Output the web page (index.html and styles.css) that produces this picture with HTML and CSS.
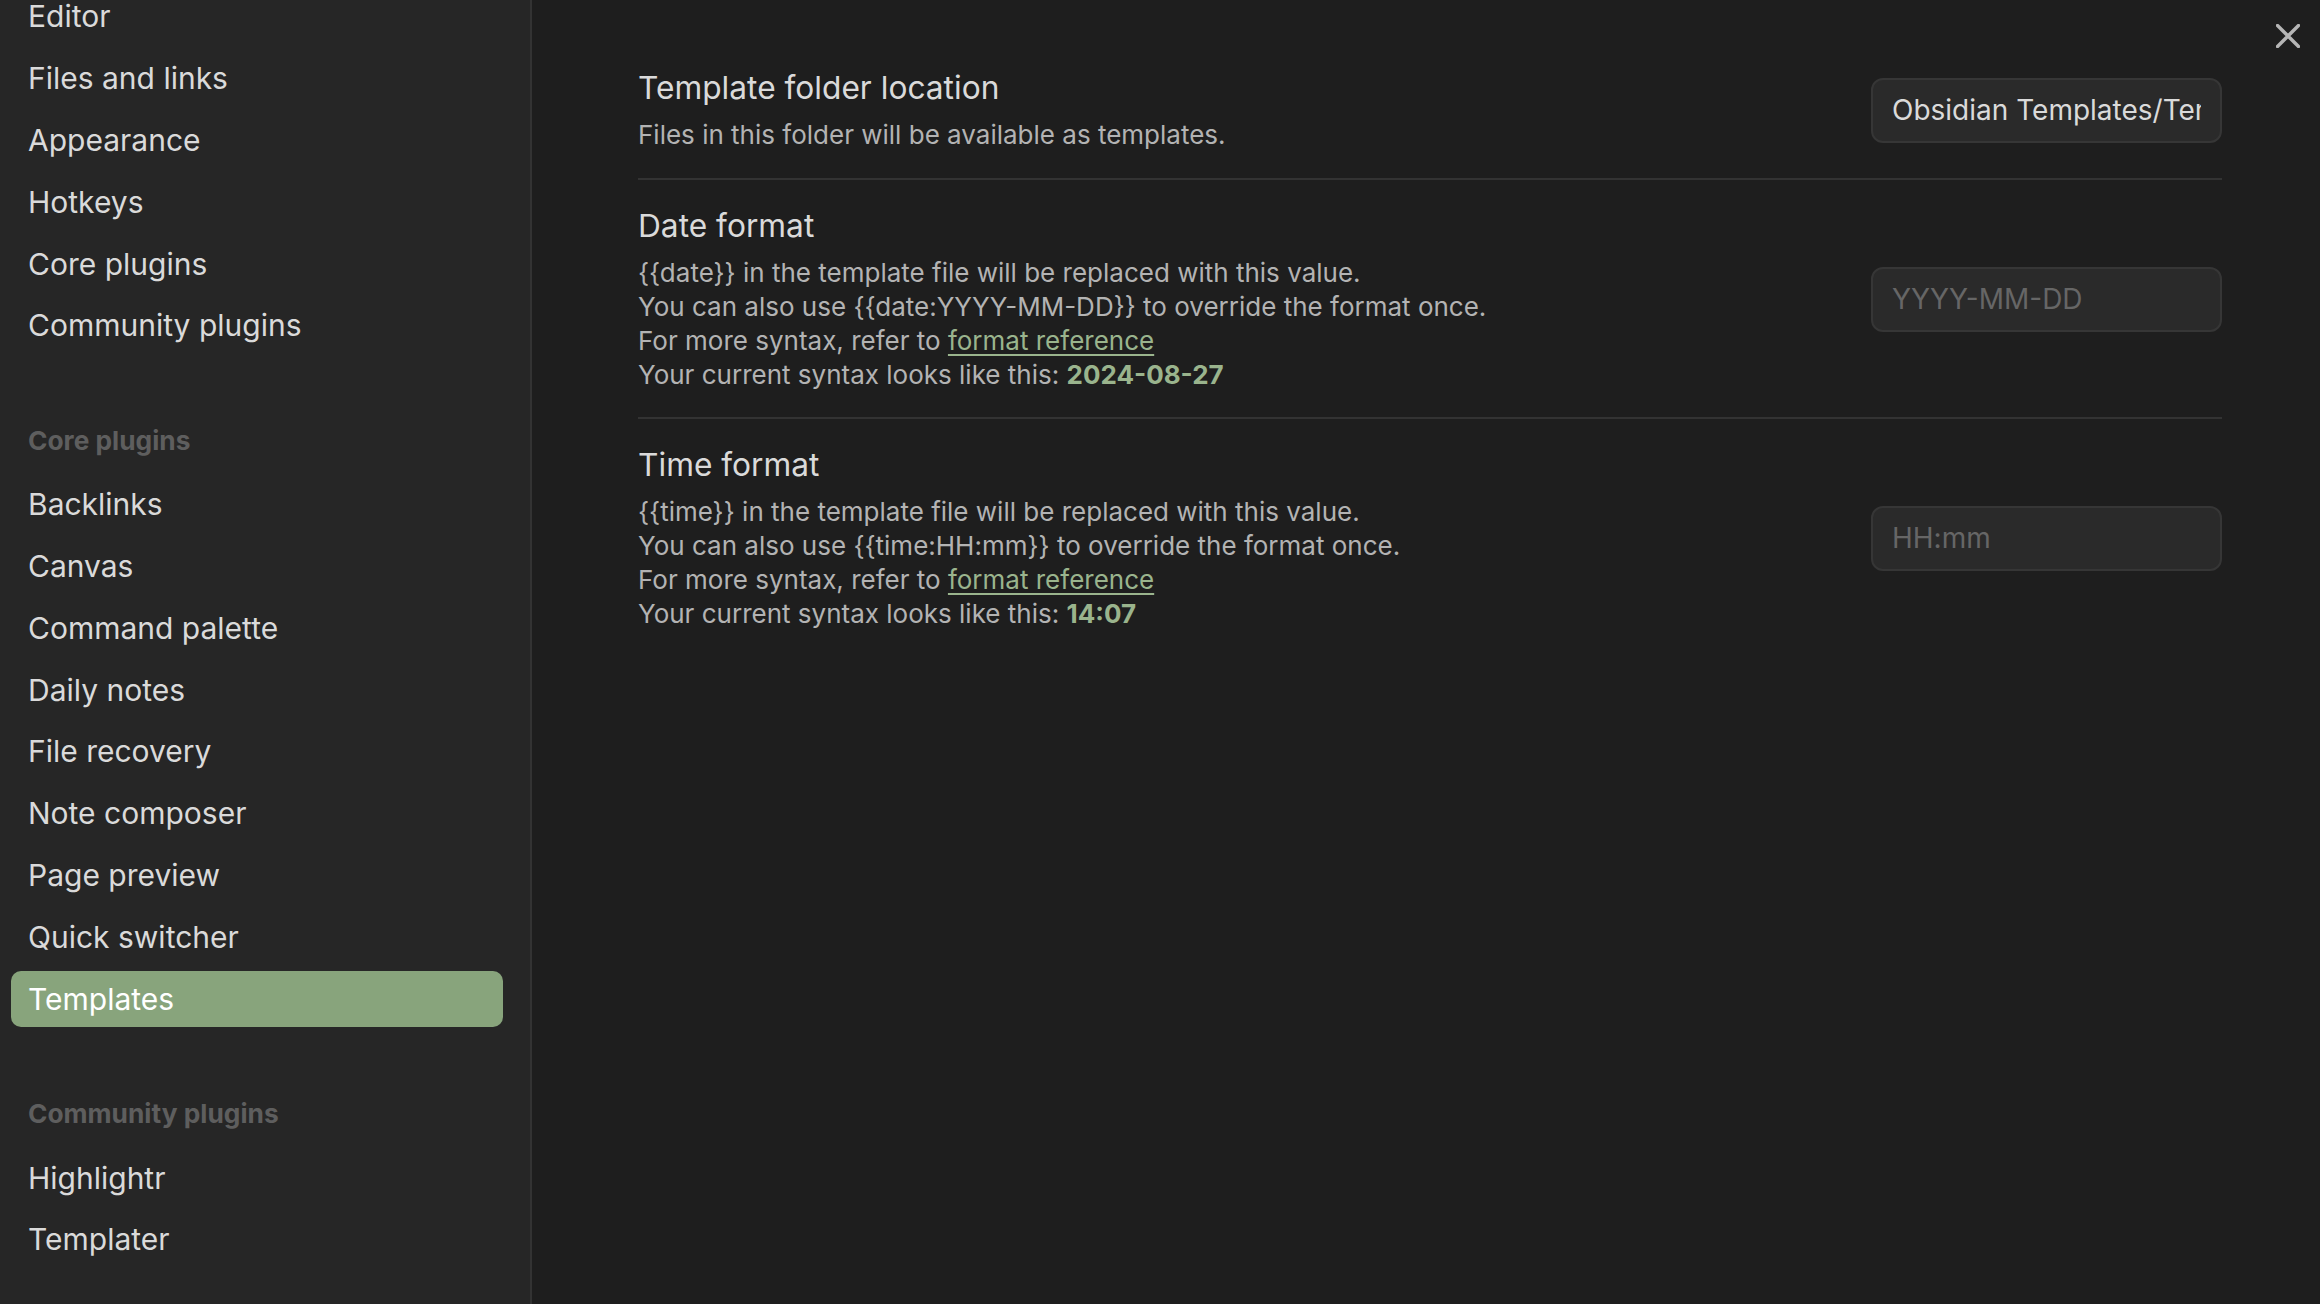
FILE: index.html
```html
<!DOCTYPE html>
<html lang="en">
<head>
<meta charset="utf-8">
<title>Settings – Templates</title>
<link rel="stylesheet" href="styles.css">
</head>
<body>
<div class="app">
  <nav class="sidebar">
    <div class="nav-list">
      <div class="nav-item">Editor</div>
      <div class="nav-item">Files and links</div>
      <div class="nav-item">Appearance</div>
      <div class="nav-item">Hotkeys</div>
      <div class="nav-item">Core plugins</div>
      <div class="nav-item">Community plugins</div>
      <div class="nav-heading">Core plugins</div>
      <div class="nav-item">Backlinks</div>
      <div class="nav-item">Canvas</div>
      <div class="nav-item">Command palette</div>
      <div class="nav-item">Daily notes</div>
      <div class="nav-item">File recovery</div>
      <div class="nav-item">Note composer</div>
      <div class="nav-item">Page preview</div>
      <div class="nav-item">Quick switcher</div>
      <div class="nav-item is-active">Templates</div>
      <div class="nav-heading">Community plugins</div>
      <div class="nav-item">Highlightr</div>
      <div class="nav-item">Templater</div>
    </div>
  </nav>
  <main class="content">
    <button class="close-btn" aria-label="Close">
      <svg viewBox="0 0 24 24" width="24" height="24"><path d="M1.5 1.5 22.5 22.5M22.5 1.5 1.5 22.5"/></svg>
    </button>
    <section class="setting">
      <div class="setting-info">
        <div class="setting-name">Template folder location</div>
        <div class="setting-desc">Files in this folder will be available as templates.</div>
      </div>
      <div class="setting-control">
        <div class="text-input"><span class="field value">Obsidian Templates/Templates</span></div>
      </div>
    </section>
    <section class="setting">
      <div class="setting-info">
        <div class="setting-name">Date format</div>
        <div class="setting-desc">
          <div>{{date}} in the template file will be replaced with this value.</div>
          <div>You can also use {{date:YYYY-MM-DD}} to override the format once.</div>
          <div>For more syntax, refer to <a class="link">format reference</a></div>
          <div>Your current syntax looks like this: <b class="sample">2024-08-27</b></div>
        </div>
      </div>
      <div class="setting-control">
        <div class="text-input"><span class="field placeholder">YYYY-MM-DD</span></div>
      </div>
    </section>
    <section class="setting">
      <div class="setting-info">
        <div class="setting-name">Time format</div>
        <div class="setting-desc">
          <div>{{time}} in the template file will be replaced with this value.</div>
          <div>You can also use {{time:HH:mm}} to override the format once.</div>
          <div>For more syntax, refer to <a class="link">format reference</a></div>
          <div>Your current syntax looks like this: <b class="sample">14:07</b></div>
        </div>
      </div>
      <div class="setting-control">
        <div class="text-input"><span class="field placeholder">HH:mm</span></div>
      </div>
    </section>
  </main>
</div>
</body>
</html>
```
FILE: styles.css
```css
html, body {
  margin: 0;
  padding: 0;
  height: 100%;
  background: #1e1e1e;
}
body {
  font-family: Inter, "Noto Sans", sans-serif;
  color: #dadada;
  overflow: hidden;
}
.app {
  display: flex;
  height: 1304px;
}
.sidebar {
  width: 530px;
  flex: none;
  background: #262626;
  border-right: 2px solid #333333;
  overflow: hidden;
}
.nav-list {
  display: flex;
  flex-direction: column;
  margin-top: -11.7px;
  padding: 0 27px 0 11px;
}
.nav-item {
  height: 56px;
  line-height: 56px;
  padding: 0 17px;
  margin-bottom: 5.8px;
  font-size: 30px;
  color: #dadada;
  border-radius: 10px;
  white-space: nowrap;
}
.nav-item.is-active {
  background: #88a47c;
  color: #ffffff;
}
.nav-heading {
  height: 40px;
  line-height: 40px;
  margin: 61.6px 0 15.6px;
  padding: 0 17px;
  font-size: 26.3px;
  font-weight: 700;
  color: #5e5e5e;
  white-space: nowrap;
}
.content {
  flex: 1;
  position: relative;
  padding: 42px 98px 0 106px;
  background: #1e1e1e;
}
.close-btn {
  position: absolute;
  top: 24px;
  right: 20px;
  width: 24px;
  height: 24px;
  padding: 0;
  border: 0;
  background: none;
}
.close-btn svg {
  display: block;
  stroke: #b5b5b5;
  stroke-width: 3.4;
  stroke-linecap: round;
  fill: none;
}
.setting {
  display: flex;
  align-items: center;
  gap: 40px;
  padding: 26px 0 25px;
  border-top: 2px solid #333333;
}
.setting:first-of-type {
  border-top: 0;
  padding-bottom: 26px;
}
.setting-info {
  flex: 1;
}
.setting-name {
  font-size: 31.7px;
  line-height: 40px;
  color: #dadada;
}
.setting-desc {
  margin-top: 10px;
  font-size: 26px;
  line-height: 34px;
  color: #b3b3b3;
}
.link {
  color: #9ab48d;
  text-decoration: underline;
  text-underline-offset: 4px;
}
.sample {
  color: #9ab48d;
  font-weight: 700;
}
.text-input {
  box-sizing: border-box;
  width: 351px;
  height: 65px;
  padding: 0 19px;
  background: #2a2a2a;
  border: 2px solid #363636;
  border-radius: 12px;
  font-size: 28px;
  line-height: 61px;
}
.field {
  display: block;
  white-space: nowrap;
  overflow: hidden;
}
.value {
  color: #dadada;
}
.placeholder {
  color: #666666;
}
```
